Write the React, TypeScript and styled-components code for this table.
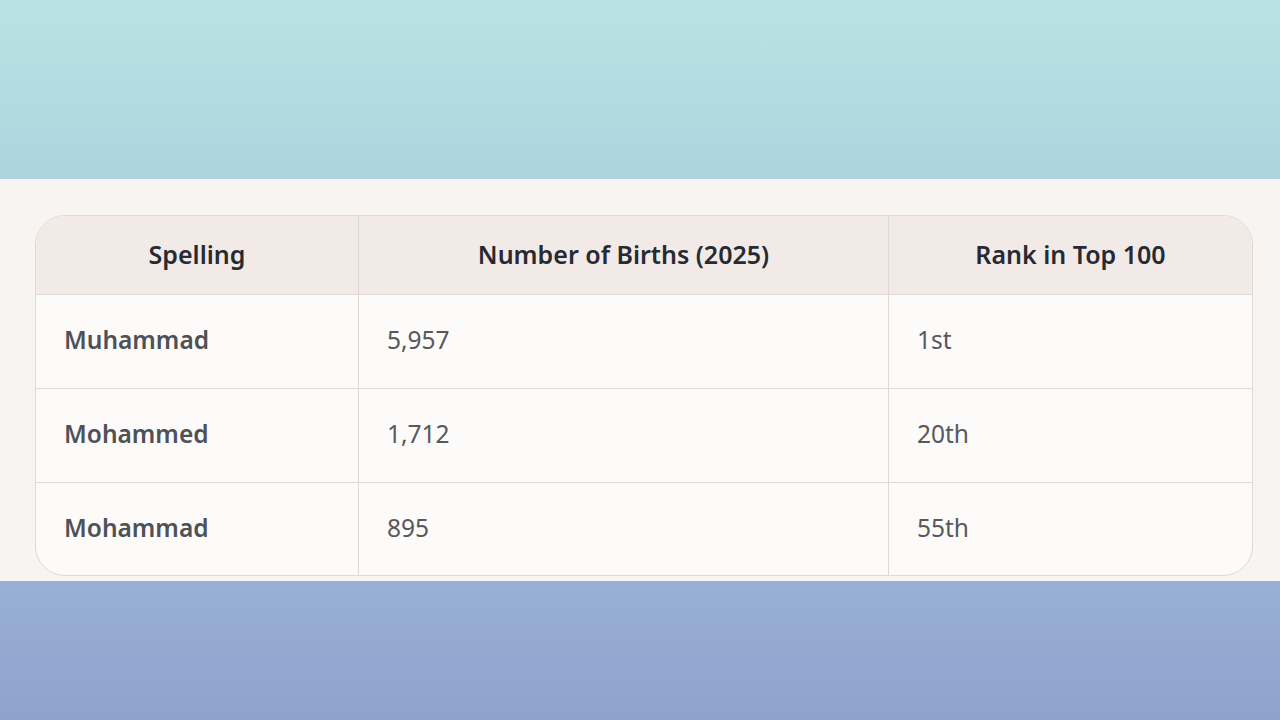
import React from "react";
import styled, { createGlobalStyle } from "styled-components";

const Global = createGlobalStyle`
  html, body { margin: 0; padding: 0; }
  body { width: 1280px; height: 720px; overflow: hidden; font-family: "Noto Sans", "Open Sans", sans-serif; }
`;

const Page = styled.div`
  width: 1280px;
  height: 720px;
  display: flex;
  flex-direction: column;
`;

const TopBand = styled.div`
  height: 179px;
  background: linear-gradient(180deg, #b9e3e3 0%, #acd4df 100%);
`;

const Middle = styled.div`
  height: 402px;
  background: #f7f4f1;
  padding: 36px 27px 0 35px;
  box-sizing: border-box;
`;

const BottomBand = styled.div`
  flex: 1;
  background: linear-gradient(180deg, #9aafd5 0%, #8ea2cc 100%);
`;

const Card = styled.div`
  width: 1218px;
  height: 361px;
  box-sizing: border-box;
  border: 1.5px solid #dfd9d4;
  border-radius: 30px;
  overflow: hidden;
  background: #fcfbf9;
  display: grid;
  grid-template-columns: 323px 530px 1fr;
  grid-template-rows: 78px 94px 94px 1fr;
`;

const HeadCell = styled.div<{ $last?: boolean }>`
  background: #f1eae6;
  display: flex;
  align-items: center;
  justify-content: center;
  font-size: 25px;
  font-weight: 600;
  color: #272a33;
  border-right: ${(p) => (p.$last ? "none" : "1.5px solid #dfd9d4")};
  padding-bottom: 2px;
`;

const Cell = styled.div<{ $last?: boolean; $bold?: boolean }>`
  display: flex;
  align-items: center;
  padding-left: 28px;
  padding-bottom: 4px;
  font-size: 24.5px;
  font-weight: ${(p) => (p.$bold ? 600 : 400)};
  color: ${(p) => (p.$bold ? "#4f5157" : "#56585e")};
  border-right: ${(p) => (p.$last ? "none" : "1.5px solid #dfd9d4")};
  border-top: 1.5px solid #dfd9d4;
`;

const rows = [
  ["Muhammad", "5,957", "1st"],
  ["Mohammed", "1,712", "20th"],
  ["Mohammad", "895", "55th"],
];

export default function App() {
  return (
    <Page>
      <Global />
      <TopBand />
      <Middle>
        <Card>
          <HeadCell>Spelling</HeadCell>
          <HeadCell>Number of Births (2025)</HeadCell>
          <HeadCell $last>Rank in Top 100</HeadCell>
          {rows.map((r) => (
            <React.Fragment key={r[0]}>
              <Cell $bold>{r[0]}</Cell>
              <Cell>{r[1]}</Cell>
              <Cell $last>{r[2]}</Cell>
            </React.Fragment>
          ))}
        </Card>
      </Middle>
      <BottomBand />
    </Page>
  );
}
